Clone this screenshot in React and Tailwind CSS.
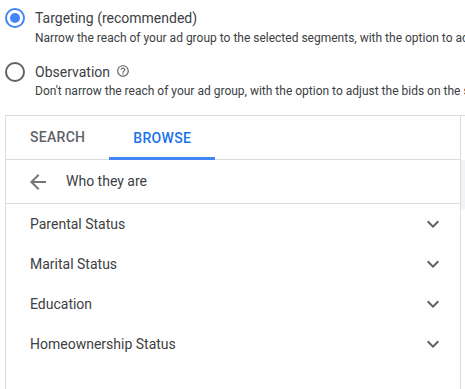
import React from "react";

const items = ["Parental Status", "Marital Status", "Education", "Homeownership Status"];

function Radio({ checked }) {
  return (
    <div className="w-[30px] pl-[5px] shrink-0">
      <div
        className={`w-[20px] h-[20px] rounded-full border-2 flex items-center justify-center ${
          checked ? "border-[#4285f4]" : "border-[#5f6368]"
        }`}
      >
        {checked && <div className="w-[10px] h-[10px] rounded-full bg-[#4285f4]" />}
      </div>
    </div>
  );
}

function ChevronDown() {
  return (
    <svg width="24" height="24" viewBox="0 0 24 24" className="fill-[#5f6368]">
      <path d="M16.59 8.59L12 13.17 7.41 8.59 6 10l6 6 6-6z" />
    </svg>
  );
}

function App() {
  return (
    <div className="w-[465px] h-[389px] overflow-hidden bg-white whitespace-nowrap text-[#3c4043]" style={{ fontFamily: "Roboto, Arial, sans-serif" }}>
      {/* OPTIONS */}
      <div className="pt-[8px]">
        <div className="flex">
          <Radio checked />
          <div className="pl-[5px]">
            <div className="text-[14px] leading-[20px]">Targeting (recommended)</div>
            <div className="mt-[2px] text-[12px] leading-[16px]">
              Narrow the reach of your ad group to the selected segments, with the option to adjust the bids
            </div>
          </div>
        </div>
        <div className="flex mt-[16px]">
          <Radio />
          <div className="pl-[5px]">
            <div className="flex items-center text-[14px] leading-[20px]">
              Observation
              <svg width="14" height="14" viewBox="0 0 24 24" className="ml-[6px] -mt-[3px] fill-[#5f6368]">
                <path d="M11 18h2v-2h-2v2zm1-16C6.48 2 2 6.48 2 12s4.48 10 10 10 10-4.48 10-10S17.52 2 12 2zm0 18c-4.41 0-8-3.59-8-8s3.59-8 8-8 8 3.59 8 8-3.59 8-8 8zm0-14c-2.21 0-4 1.790-4 4h2c0-1.1.9-2 2-2s2 .9 2 2c0 2-3 1.75-3 5h2c0-2.25 3-2.5 3-5 0-2.21-1.79-4-4-4z" />
              </svg>
            </div>
            <div className="mt-[1px] text-[12px] leading-[16px]">
              Don't narrow the reach of your ad group, with the option to adjust the bids on the selected segments
            </div>
          </div>
        </div>
      </div>

      {/* PANEL */}
      <div className="mt-[16px] ml-[5px] border-t border-[#dadce0] flex">
        <div className="w-[456px] h-[280px] border-l border-r border-[#dadce0]">
          <div className="flex h-[44px] border-b border-[#dadce0]">
            <div className="px-6 flex items-center text-[14px] font-medium tracking-[0.3px] text-[#5f6368]">SEARCH</div>
            <div className="px-6 flex items-center text-[14px] font-medium tracking-[0.3px] text-[#1a73e8] border-b-[3px] border-[#4285f4] pt-[3px] -mb-[1px]">
              BROWSE
            </div>
          </div>
          <div className="flex items-center h-[44px] border-b border-[#dadce0]">
            <svg width="24" height="24" viewBox="0 0 24 24" className="ml-[20px] fill-[#757575]">
              <path d="M20 11H7.83l5.59-5.59L12 4l-8 8 8 8 1.41-1.41L7.83 13H20v-2z" />
            </svg>
            <span className="ml-[16px] text-[14px]">Who they are</span>
          </div>
          <div>
            {items.map((item) => (
              <div key={item} className="flex items-center justify-between h-[40px] pl-[24px] pr-[15px]">
                <span className="text-[14px]">{item}</span>
                <ChevronDown />
              </div>
            ))}
          </div>
        </div>
        <div className="flex-1 pt-[44px]">
          <div className="h-[49px] bg-[#f1f3f4]" />
        </div>
      </div>
    </div>
  );
}

export default App;
